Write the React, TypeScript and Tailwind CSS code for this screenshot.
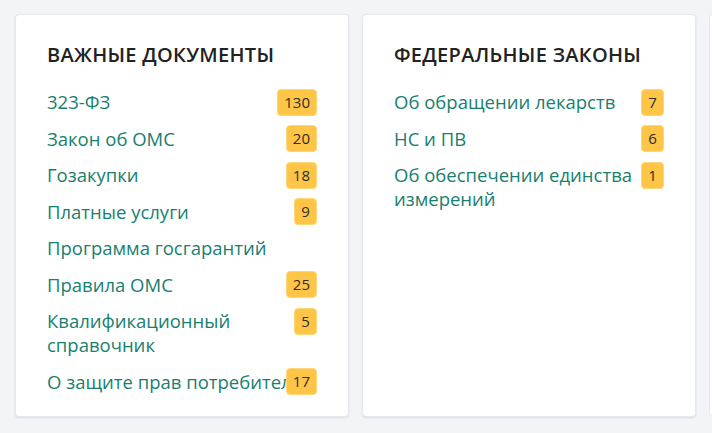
import React from 'react';

type DocLink = {
  title: string;
  count?: number;
  nowrap?: boolean;
};

const important: DocLink[] = [
  { title: '323-ФЗ', count: 130 },
  { title: 'Закон об ОМС', count: 20 },
  { title: 'Гозакупки', count: 18 },
  { title: 'Платные услуги', count: 9 },
  { title: 'Программа госгарантий' },
  { title: 'Правила ОМС', count: 25 },
  { title: 'Квалификационный справочник', count: 5 },
  { title: 'О защите прав потребителей', count: 17, nowrap: true },
];

const federal: DocLink[] = [
  { title: 'Об обращении лекарств', count: 7 },
  { title: 'НС и ПВ', count: 6 },
  { title: 'Об обеспечении единства измерений', count: 1 },
];

const Badge: React.FC<{ value: number }> = ({ value }) => (
  <span className="shrink-0 -my-[1.5px] h-[27px] min-w-[23px] px-[6px] flex items-center justify-center rounded-[4px] bg-[#ffc547] border border-[#ffd77a] text-[15px] leading-none text-[#2d2d2d]">
    {value}
  </span>
);

const DocCard: React.FC<{ heading: string; items: DocLink[] }> = ({ heading, items }) => (
  <div className="w-[334px] shrink-0 bg-white rounded-[4px] border border-[#e6e8f0] shadow-[0_1px_2px_rgba(30,40,70,0.12)] px-[31px] pt-[26px] pb-[22px]">
    <h2 className="text-[20px] leading-7 font-semibold uppercase tracking-[0.3px] text-[#222]">
      {heading}
    </h2>
    <ul className="mt-[21px] flex flex-col gap-[12.5px]">
      {items.map((item) => (
        <li key={item.title} className={`flex items-start ${item.nowrap ? '' : 'gap-2'}`}>
          <a
            href="#"
            className={`flex-1 min-w-0 text-[18.5px] leading-6 text-[#17806f] ${
              item.nowrap ? 'whitespace-nowrap overflow-hidden' : ''
            }`}
          >
            {item.title}
          </a>
          {item.count !== undefined && <Badge value={item.count} />}
        </li>
      ))}
    </ul>
  </div>
);

export default function App() {
  return (
    <div
      className="w-[712px] h-[433px] overflow-hidden bg-[#f3f4f8] px-[15px] pt-[14px]"
      style={{ fontFamily: '"Open Sans", "Noto Sans", sans-serif' }}
    >
      <div className="flex gap-[13px] items-stretch">
        <DocCard heading="Важные документы" items={important} />
        <DocCard heading="Федеральные законы" items={federal} />
        <div className="w-[334px] shrink-0 bg-white rounded-[4px] border border-[#e6e8f0]" />
      </div>
    </div>
  );
}
